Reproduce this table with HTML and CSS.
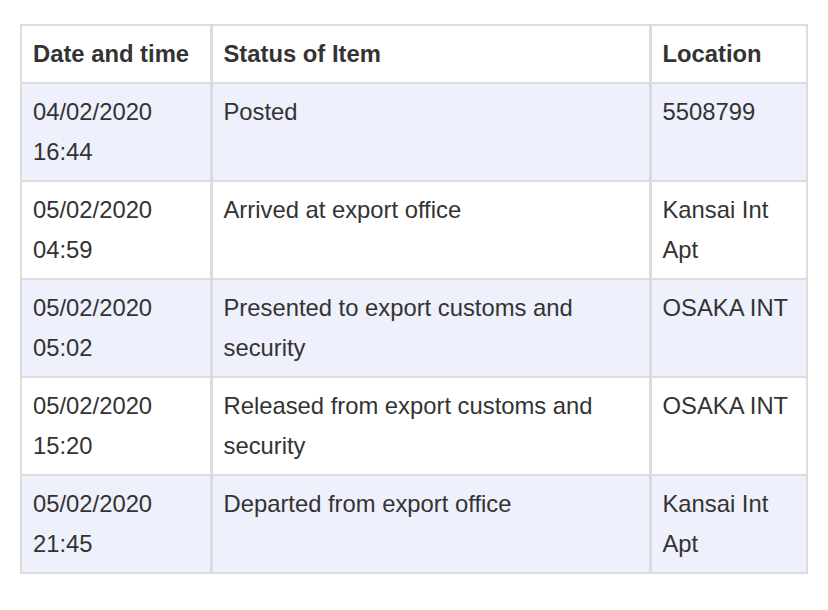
FILE: index.html
```html
<!DOCTYPE html>
<html>
<head>
<meta charset="utf-8">
<link rel="stylesheet" href="styles.css">
</head>
<body>
<table class="track">
  <colgroup>
    <col class="c-date">
    <col class="c-status">
    <col class="c-loc">
  </colgroup>
  <thead>
    <tr><th>Date and time</th><th>Status of Item</th><th>Location</th></tr>
  </thead>
  <tbody>
    <tr class="alt"><td>04/02/2020<br>16:44</td><td>Posted</td><td>5508799</td></tr>
    <tr><td>05/02/2020<br>04:59</td><td>Arrived at export office</td><td>Kansai Int Apt</td></tr>
    <tr class="alt"><td>05/02/2020<br>05:02</td><td>Presented to export customs and security</td><td>OSAKA INT</td></tr>
    <tr><td>05/02/2020<br>15:20</td><td>Released from export customs and security</td><td>OSAKA INT</td></tr>
    <tr class="alt"><td>05/02/2020<br>21:45</td><td>Departed from export office</td><td>Kansai Int Apt</td></tr>
  </tbody>
</table>
</body>
</html>
```
FILE: styles.css
```css
html, body {
  margin: 0;
  background: #fff;
}
body {
  padding: 24px 20px 0 20px;
  font-family: "Liberation Sans", Arial, Helvetica, sans-serif;
  color: #333;
}
.track {
  border-collapse: collapse;
  table-layout: fixed;
  width: 786px;
  font-size: 23.8px;
  line-height: 40px;
}
.c-date { width: 190px; }
.c-status { width: 439px; }
.c-loc { width: 157px; }
.track th,
.track td {
  border: 2px solid #dcdcdc;
  padding: 8px 10px 8px 11px;
  text-align: left;
  vertical-align: top;
}
.track th + th,
.track td + td {
  border-left-width: 3px;
}
.track th {
  font-weight: bold;
  background: #fff;
}
.track tr.alt td {
  background: #eef0fc;
}
```
